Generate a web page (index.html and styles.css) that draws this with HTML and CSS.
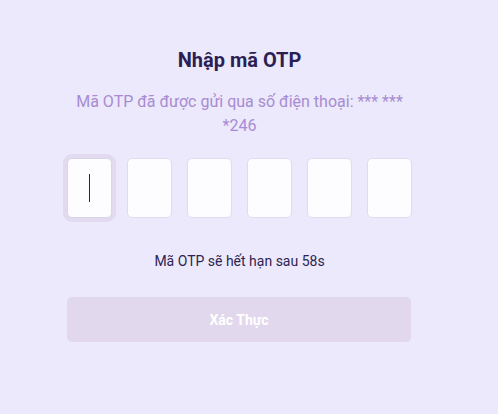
FILE: index.html
```html
<!DOCTYPE html>
<html lang="vi">
<head>
<meta charset="utf-8">
<link rel="stylesheet" href="styles.css">
</head>
<body>
<div class="otp">
  <h1 class="title">Nhập mã OTP</h1>
  <p class="subtitle">Mã OTP đã được gửi qua số điện thoại: *** *** *246</p>
  <div class="boxes">
    <div class="box focus"><span class="caret"></span></div>
    <div class="box"></div>
    <div class="box"></div>
    <div class="box"></div>
    <div class="box"></div>
    <div class="box"></div>
  </div>
  <p class="timer">Mã OTP sẽ hết hạn sau 58s</p>
  <button class="submit">Xác Thực</button>
</div>
</body>
</html>
```
FILE: styles.css
```css
html, body {
  margin: 0;
  padding: 0;
  background: #ebe9fb;
  height: 100%;
}
body {
  font-family: Roboto, "Noto Sans", sans-serif;
}
.otp {
  width: 345px;
  margin-left: 67px;
  padding-top: 46px;
  display: flex;
  flex-direction: column;
  align-items: center;
}
.title {
  margin: 0;
  font-size: 20px;
  font-weight: 700;
  color: #2c1e55;
  line-height: 28px;
}
.subtitle {
  margin: 16px 0 0;
  font-size: 16px;
  line-height: 24px;
  color: #a88bd2;
  text-align: center;
}
.boxes {
  margin-top: 20px;
  display: flex;
  gap: 15px;
  width: 100%;
}
.box {
  width: 45px;
  height: 60px;
  box-sizing: border-box;
  background: #fdfcff;
  border: 1px solid #e0dcf0;
  border-radius: 5px;
  display: flex;
  align-items: center;
  justify-content: center;
}
.box.focus {
  box-shadow: 0 0 0 4px #e2dbef;
  border-color: #dcd3ec;
}
.caret {
  width: 1px;
  height: 28px;
  background: #2c1e55;
}
.timer {
  margin: 33px 0 0;
  font-size: 14px;
  line-height: 20px;
  color: #2e2452;
}
.submit {
  margin-top: 26px;
  width: 344px;
  height: 45px;
  border: none;
  border-radius: 5px;
  background: #e2d8ee;
  color: #ffffff;
  font-family: Roboto, "Noto Sans", sans-serif;
  font-size: 14px;
  font-weight: 700;
  align-self: flex-start;
}
```
